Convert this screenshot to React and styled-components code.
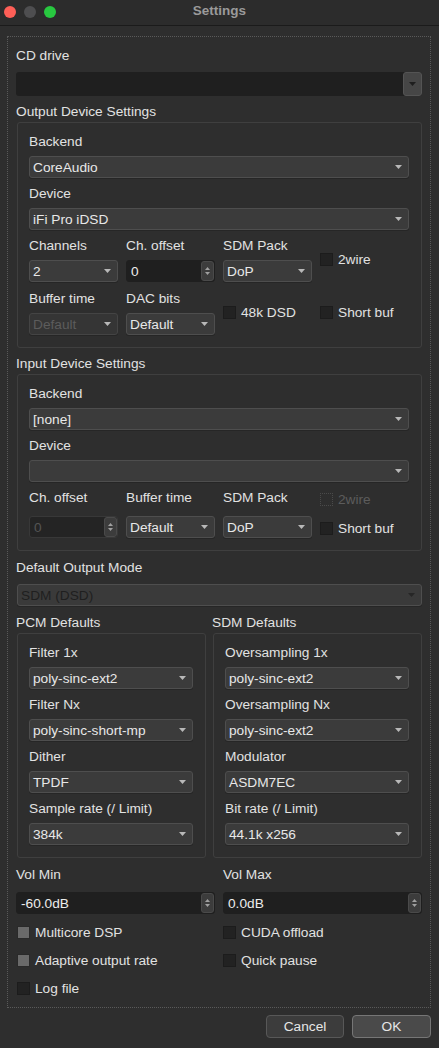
import styled, { createGlobalStyle } from "styled-components";

const GlobalStyle = createGlobalStyle`
  html, body {
    margin: 0;
    padding: 0;
    background: #2e2e2e;
  }
  body {
    font-family: "Liberation Sans", Arial, sans-serif;
    font-size: 13.7px;
    color: #e2e2e2;
  }
`;

const Window = styled.div`
  width: 439px;
  height: 1048px;
  background: #2e2e2e;
  display: flex;
  flex-direction: column;
  overflow: hidden;
`;

const TitleBar = styled.div`
  height: 25px;
  border-bottom: 1px solid #1b1b1b;
  display: grid;
  grid-template-columns: 1fr auto 1fr;
  align-items: center;
  background: #2c2c2c;
`;

const Lights = styled.div`
  display: flex;
  gap: 8px;
  padding-left: 4px;
  margin-top: -2px;
`;

const Light = styled.span`
  width: 12px;
  height: 12px;
  border-radius: 50%;
  background: ${(p) => p.$color};
`;

const Title = styled.div`
  font-weight: bold;
  color: #9a9a9a;
  font-size: 13.5px;
  margin-top: -4px;
`;

const Body = styled.div`
  padding: 10px 8px 0 7px;
`;

const Frame = styled.div`
  border: 1px dotted #5a5a5a;
  padding: 10px 8px 9px 8px;
  display: flex;
  flex-direction: column;
`;

const Label = styled.div`
  height: 16px;
  line-height: 18px;
  white-space: nowrap;
  color: ${(p) => (p.$disabled ? "#5c5c5c" : "#e2e2e2")};
  margin-top: ${(p) => p.$mt || 0}px;
`;

const Group = styled.div`
  border: 1px solid #3f3f3f;
  border-radius: 3px;
  margin-left: 1px;
  margin-top: 3px;
  padding: 10px 12px 12px 11px;
  display: flex;
  flex-direction: column;
  gap: 7px;
`;

const Grid4 = styled.div`
  display: grid;
  grid-template-columns: repeat(4, 1fr);
  grid-template-rows: 16px 22px;
  column-gap: 8px;
  row-gap: ${(p) => p.$rowGap}px;
  margin-top: ${(p) => p.$mt || 0}px;
`;

const CheckCell = styled.div`
  grid-row: ${(p) => (p.$span ? "span 2" : "auto")};
  align-self: center;
  margin-top: ${(p) => p.$mt || 0}px;
`;

const ComboBox = styled.div`
  height: 22px;
  box-sizing: border-box;
  display: flex;
  align-items: center;
  justify-content: space-between;
  padding: 0 6px 0 3px;
  border-radius: 3px;
  border: 1px solid ${(p) => (p.$disabled ? "#444" : "#4e4e4e")};
  background: ${(p) =>
    p.$dark ? "#3a3a3a" : p.$disabled ? "#353535" : "#3b3b3b"};
  box-shadow: 0 1px 0 #262626;
  color: ${(p) =>
    p.$dark ? "#1f1f1f" : p.$disabled ? "#5c5c5c" : "#e8e8e8"};
  margin-left: ${(p) => p.$ml || 0}px;
  white-space: nowrap;
  overflow: hidden;
`;

const EditCombo = styled.div`
  height: 24px;
  display: flex;
  border-radius: 3px;
  background: #1f1f1f;
  margin-top: 9px;
`;

const EditField = styled.div`
  flex: 1;
`;

const EditButton = styled.div`
  width: 19px;
  box-sizing: border-box;
  border: 1px solid #545454;
  border-radius: 3px;
  background: #464646;
  display: flex;
  align-items: center;
  justify-content: center;
`;

const SpinBox = styled.div`
  height: 22px;
  box-sizing: border-box;
  display: flex;
  border-radius: 3px;
  background: ${(p) => (p.$disabled ? "#242424" : "#1f1f1f")};
  border: 1px solid ${(p) => (p.$disabled ? "#383838" : "#1f1f1f")};
  color: ${(p) => (p.$disabled ? "#545454" : "#ececec")};
`;

const SpinText = styled.div`
  flex: 1;
  display: flex;
  align-items: center;
  padding-left: 4px;
  padding-top: 1px;
`;

const SpinButtons = styled.div`
  width: 11px;
  border-radius: 3px;
  background: #3c3c3c;
  border: 1px solid #4a4a4a;
  display: flex;
  flex-direction: column;
  align-items: center;
  justify-content: center;
  gap: 2px;
`;

const CheckRow = styled.div`
  display: flex;
  align-items: center;
  gap: 5px;
  height: 20px;
  color: ${(p) => (p.$disabled ? "#5c5c5c" : "#e2e2e2")};
  white-space: nowrap;
`;

const Box = styled.span`
  width: 13px;
  height: 13px;
  flex: none;
  box-sizing: border-box;
  margin-left: ${(p) => p.$ml || 0}px;
  background: ${(p) =>
    p.$gray ? "#6a6a6a" : p.$disabled ? "transparent" : "#222"};
  border: 1px
    ${(p) =>
      p.$disabled
        ? "dotted #4a4a4a"
        : p.$gray
        ? "solid #2a2a2a"
        : "solid #1c1c1c"};
`;

const TwoCols = styled.div`
  display: grid;
  grid-template-columns: ${(p) => p.$cols};
  column-gap: ${(p) => p.$gap}px;
  margin-top: ${(p) => p.$mt || 0}px;
`;

const Col = styled.div`
  display: flex;
  flex-direction: column;
  gap: ${(p) => p.$gap || 0}px;
`;

const CheckGrid = styled.div`
  display: grid;
  grid-template-columns: 1fr 1fr;
  column-gap: 8px;
  row-gap: 8px;
  margin-top: 8px;
`;

const Footer = styled.div`
  display: flex;
  justify-content: flex-end;
  gap: 8px;
  padding: 7px 8px 0 0;
`;

const Button = styled.button`
  width: ${(p) => p.$w}px;
  height: 23px;
  border-radius: 4px;
  font-family: inherit;
  font-size: 13.7px;
  color: #e6e6e6;
  background: ${(p) => (p.$primary ? "#4a4a4a" : "#3c3c3c")};
  border: 1px solid ${(p) => (p.$primary ? "#767676" : "#585858")};
  padding: 0;
`;

const Arrow = ({ color = "#b8b8b8" }) => (
  <svg width="7" height="4" viewBox="0 0 7 4">
    <path d="M0 0 L7 0 L3.5 4 Z" fill={color} />
  </svg>
);

const SpinArrows = () => (
  <>
    <svg width="5" height="3" viewBox="0 0 5 3">
      <path d="M0 3 L5 3 L2.5 0 Z" fill="#a0a0a0" />
    </svg>
    <svg width="5" height="3" viewBox="0 0 5 3">
      <path d="M0 0 L5 0 L2.5 3 Z" fill="#a0a0a0" />
    </svg>
  </>
);

function Combo({ value, disabled, dark, ml }) {
  return (
    <ComboBox $disabled={disabled} $dark={dark} $ml={ml}>
      <span>{value}</span>
      <Arrow color={dark ? "#262626" : "#b8b8b8"} />
    </ComboBox>
  );
}

function Spin({ value, disabled }) {
  return (
    <SpinBox $disabled={disabled}>
      <SpinText>{value}</SpinText>
      <SpinButtons>
        <SpinArrows />
      </SpinButtons>
    </SpinBox>
  );
}

function Check({ label, gray, disabled, ml }) {
  return (
    <CheckRow $disabled={disabled}>
      <Box $gray={gray} $disabled={disabled} $ml={ml} />
      {label}
    </CheckRow>
  );
}

export default function App() {
  return (
    <Window>
      <GlobalStyle />
      <TitleBar>
        <Lights>
          <Light $color="#fe5f57" />
          <Light $color="#4e4e50" />
          <Light $color="#28c840" />
        </Lights>
        <Title>Settings</Title>
        <div />
      </TitleBar>
      <Body>
        <Frame>
          <Label>CD drive</Label>
          <EditCombo>
            <EditField />
            <EditButton>
              <Arrow color="#1e1e1e" />
            </EditButton>
          </EditCombo>

          <Label $mt={7}>Output Device Settings</Label>
          <Group>
            <Label>Backend</Label>
            <Combo value="CoreAudio" />
            <Label>Device</Label>
            <Combo value="iFi Pro iDSD" />
            <Grid4 $rowGap={7}>
              <Label>Channels</Label>
              <Label>Ch. offset</Label>
              <Label>SDM Pack</Label>
              <CheckCell $span>
                <Check label="2wire" />
              </CheckCell>
              <Combo value="2" />
              <Spin value="0" />
              <Combo value="DoP" />
            </Grid4>
            <Grid4 $rowGap={7} $mt={1}>
              <Label>Buffer time</Label>
              <Label>DAC bits</Label>
              <CheckCell $span>
                <Check label="48k DSD" />
              </CheckCell>
              <CheckCell $span>
                <Check label="Short buf" />
              </CheckCell>
              <Combo value="Default" disabled />
              <Combo value="Default" />
            </Grid4>
          </Group>

          <Label $mt={7}>Input Device Settings</Label>
          <Group>
            <Label>Backend</Label>
            <Combo value="[none]" />
            <Label>Device</Label>
            <Combo value="" />
            <Grid4 $rowGap={11}>
              <Label>Ch. offset</Label>
              <Label>Buffer time</Label>
              <Label>SDM Pack</Label>
              <CheckCell $mt={4}>
                <Check label="2wire" disabled />
              </CheckCell>
              <Spin value="0" disabled />
              <Combo value="Default" />
              <Combo value="DoP" />
              <CheckCell $mt={2}>
                <Check label="Short buf" />
              </CheckCell>
            </Grid4>
          </Group>

          <Label $mt={8}>Default Output Mode</Label>
          <TwoCols $cols="1fr" $gap={0} $mt={9}>
            <Combo value="SDM (DSD)" dark ml={1} />
          </TwoCols>

          <TwoCols $cols="190px 1fr" $gap={6} $mt={8}>
            <Col>
              <Label>PCM Defaults</Label>
              <Group>
                <Label>Filter 1x</Label>
                <Combo value="poly-sinc-ext2" />
                <Label>Filter Nx</Label>
                <Combo value="poly-sinc-short-mp" />
                <Label>Dither</Label>
                <Combo value="TPDF" />
                <Label>Sample rate (/ Limit)</Label>
                <Combo value="384k" />
              </Group>
            </Col>
            <Col>
              <Label>SDM Defaults</Label>
              <Group>
                <Label>Oversampling 1x</Label>
                <Combo value="poly-sinc-ext2" />
                <Label>Oversampling Nx</Label>
                <Combo value="poly-sinc-ext2" />
                <Label>Modulator</Label>
                <Combo value="ASDM7EC" />
                <Label>Bit rate (/ Limit)</Label>
                <Combo value="44.1k x256" />
              </Group>
            </Col>
          </TwoCols>

          <TwoCols $cols="1fr 1fr" $gap={8} $mt={8}>
            <Col $gap={10}>
              <Label>Vol Min</Label>
              <Spin value="-60.0dB" />
            </Col>
            <Col $gap={10}>
              <Label>Vol Max</Label>
              <Spin value="0.0dB" />
            </Col>
          </TwoCols>

          <CheckGrid>
            <Check label="Multicore DSP" gray ml={1} />
            <Check label="CUDA offload" />
            <Check label="Adaptive output rate" gray ml={1} />
            <Check label="Quick pause" />
            <Check label="Log file" ml={1} />
          </CheckGrid>
        </Frame>
      </Body>
      <Footer>
        <Button $w={78}>Cancel</Button>
        <Button $w={79} $primary>
          OK
        </Button>
      </Footer>
    </Window>
  );
}
